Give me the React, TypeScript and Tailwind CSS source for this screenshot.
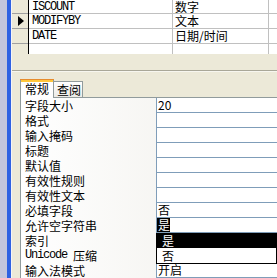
import React from "react";

const cjk = { fontFamily: "'Noto Sans CJK SC', sans-serif" };
const mono = { fontFamily: "'Liberation Mono', 'Noto Sans CJK SC', monospace" };

function GridRow({
  h,
  name,
  type,
  arrow,
  last,
}: {
  h: string;
  name?: string;
  type?: string;
  arrow?: boolean;
  last?: boolean;
}) {
  const b = last ? "" : "border-b";
  return (
    <div className={`flex ${h}`}>
      <div className={`w-[16px] bg-[#ece9d8] ${b} border-[#a0a0a0] flex items-center justify-center`}>
        {arrow && (
          <svg width="6" height="10" viewBox="0 0 6 10" className="ml-[2px]">
            <polygon points="0,0 6,5 0,10" fill="#000" />
          </svg>
        )}
      </div>
      <div className="w-px bg-black" />
      <div
        className={`w-[144px] bg-white ${b} border-r border-[#c0c0c0] pl-[3px] text-[12px] tracking-[-1.2px] text-black flex items-center`}
        style={mono}
      >
        {name}
      </div>
      <div
        className={`w-[96px] bg-white ${b} border-r border-[#c0c0c0] pl-[2px] text-[12px] text-black flex items-center`}
        style={cjk}
      >
        {type}
      </div>
      <div className={`flex-1 bg-white ${b} border-[#c0c0c0]`} />
    </div>
  );
}

function PropRow({
  label,
  value,
  children,
}: {
  label: React.ReactNode;
  value?: string;
  children?: React.ReactNode;
}) {
  return (
    <div className="flex h-[15px]">
      <div
        className="w-[135px] pl-[4px] text-[12px] leading-[15px] text-black whitespace-nowrap"
        style={cjk}
      >
        {label}
      </div>
      <div
        className="flex-1 bg-white border-l border-b border-[#7f9db9] pl-[1px] text-[12px] leading-[14px] text-black whitespace-nowrap"
        style={cjk}
      >
        {children ?? value}
      </div>
    </div>
  );
}

export default function App() {
  return (
    <div className="w-[277px] h-[278px] overflow-hidden flex bg-[#ece9d8]">
      <div className="w-[7px] bg-[#c3c6dc]" />
      <div className="w-[4px] bg-[#2f62e2]" />
      <div className="w-px bg-[#f4f4f8]" />
      <div className="flex-1 flex flex-col min-w-0">
        {/* table design grid */}
        <div className="h-[54px] flex flex-col">
          <GridRow h="h-[14px]" name="ISCOUNT" type="数字" />
          <GridRow h="h-[15px]" name="MODIFYBY" type="文本" arrow />
          <GridRow h="h-[15px]" name="DATE" type="日期/时间" />
          <GridRow h="h-[10px]" last />
        </div>
        {/* splitter */}
        <div className="h-[17px]" />
        <div className="h-px bg-[#a9a798]" />
        <div className="h-px bg-white/60" />
        <div className="h-[8px]" />
        {/* tab control */}
        <div className="flex-1 flex flex-col pl-[8px]">
          <div className="flex items-end h-[19px] relative z-10">
            <div className="w-[34px] h-[19px] bg-white border-l border-r border-[#919b9c] flex flex-col">
              <div className="h-px bg-[#e68b2c] -mx-px" />
              <div className="h-[2px] bg-[#ffc73c]" />
              <div className="pl-[4px] text-[12px] leading-[14px] text-black" style={cjk}>
                常规
              </div>
            </div>
            <div className="w-[29px] h-[16px] bg-gradient-to-b from-white to-[#ecebe6] border-t border-r border-[#919b9c] pl-[3px] text-[12px] leading-[15px] text-black mb-px" style={cjk}>
              查阅
            </div>
          </div>
          <div className="flex-1 -mt-px border-t border-l border-[#919b9c] bg-gradient-to-r from-white to-[#efeee9] relative">
            <PropRow label="字段大小" value="20" />
            <PropRow label="格式" />
            <PropRow label="输入掩码" />
            <PropRow label="标题" />
            <PropRow label="默认值" />
            <PropRow label="有效性规则" />
            <PropRow label="有效性文本" />
            <PropRow label="必填字段" value="否" />
            <PropRow label="允许空字符串">
              <span className="inline-block bg-black text-white w-[13px] h-[14px] -ml-px pl-px">是</span>
            </PropRow>
            <PropRow label="索引" />
            <PropRow
              label={
                <span className="flex">
                  <span style={mono} className="tracking-[-1.2px]">Unicode</span>
                  <span className="ml-[6px]">压缩</span>
                </span>
              }
            />
            <PropRow label="输入法模式" value="开启" />
            {/* open dropdown list */}
            <div className="absolute left-[135px] right-0 top-[135px] h-[31px] border border-black bg-white flex flex-col" style={cjk}>
              <div className="h-[14px] bg-black text-white text-[12px] leading-[14px] pl-[5px]">是</div>
              <div className="h-[15px] text-black text-[12px] leading-[15px] pl-[5px]">否</div>
            </div>
          </div>
        </div>
      </div>
    </div>
  );
}
